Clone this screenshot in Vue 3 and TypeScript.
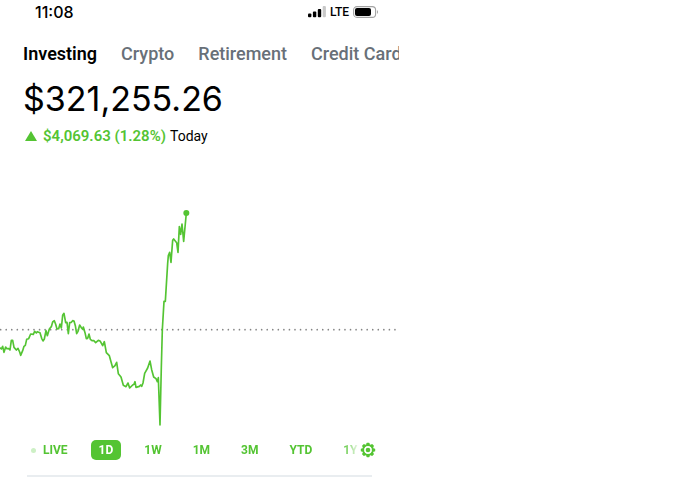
<script setup lang="ts">
import { ref } from 'vue'

const accounts: string[] = ['Investing', 'Crypto', 'Retirement', 'Credit Card']
const ranges: string[] = ['LIVE', '1D', '1W', '1M', '3M', 'YTD', '1Y']

const account = ref('Investing')
const range = ref('1D')

const samples: [number, number][] = [
  [0, 443], [4, 447], [8, 439], [12, 457], [17, 441], [20, 446], [26, 446], [30, 450],
  [34, 421], [38, 421], [42, 442], [49, 450], [54, 445], [59, 456], [62, 466], [68, 452],
  [72, 439], [76, 436], [80, 418], [86, 416], [92, 402], [100, 403], [104, 394], [109, 399],
  [112, 395], [120, 398], [125, 415], [129, 423], [133, 417], [138, 392], [142, 407], [148, 387],
  [154, 380], [158, 366], [163, 362], [167, 373], [171, 387], [176, 386], [180, 372], [184, 384],
  [188, 346], [192, 340], [197, 368], [201, 367], [205, 401], [209, 368], [214, 367], [218, 362],
  [222, 363], [226, 377], [230, 401], [234, 394], [239, 375], [244, 383], [248, 388], [250, 381],
  [255, 398], [259, 416], [263, 415], [267, 402], [271, 418], [276, 422], [282, 422], [287, 428],
  [295, 421], [301, 424], [308, 437], [313, 425], [319, 458], [328, 467], [338, 503], [345, 497],
  [350, 487], [355, 521], [363, 531], [370, 556], [378, 560], [384, 549], [389, 564], [398, 555],
  [402, 553], [405, 545], [408, 562], [418, 559], [422, 555], [425, 559], [429, 549], [434, 520],
  [443, 504], [450, 483], [455, 509], [461, 531], [468, 536], [472, 545], [475, 533], [480, 675],
  [484, 500], [487, 389], [492, 304], [496, 304], [503, 190], [505, 167], [509, 157], [513, 187],
  [518, 121], [521, 117], [530, 128], [534, 157], [538, 80], [542, 103], [546, 72], [551, 124],
  [559, 39],
]
const line = samples.map(([x, y]) => `${x},${y}`).join(' ')
const last = samples[samples.length - 1]
</script>

<template>
  <main class="screen">
    <header class="status">
      <time class="clock">11:08</time>
      <div class="signals">
        <svg class="bars" viewBox="0 0 18 12" aria-hidden="true">
          <rect x="0" y="7.5" width="3.4" height="3.8" rx="1" />
          <rect x="4.9" y="5.5" width="3.4" height="5.8" rx="1" />
          <rect x="9.8" y="3" width="3.4" height="8.3" rx="1" />
          <rect x="14.7" y="0" width="3.2" height="11.3" rx="1" fill="#c8c8c8" />
        </svg>
        <span class="network">LTE</span>
        <svg class="battery" viewBox="0 0 26 12" aria-hidden="true">
          <rect x="0.6" y="0.6" width="22" height="10.8" rx="3.4" fill="none" stroke="#a3a3a3" stroke-width="1.1" />
          <rect x="2" y="2" width="16" height="8" rx="2" />
          <path d="M24 4Q26 6 24 8Z" fill="#a3a3a3" />
        </svg>
      </div>
    </header>

    <nav class="accounts">
      <button
        v-for="name in accounts"
        :key="name"
        type="button"
        class="account"
        :class="{ active: name === account }"
        @click="account = name"
      >{{ name }}</button>
    </nav>

    <h1 class="total">$321,255.26</h1>
    <p class="change">
      <svg class="up" viewBox="0 0 12 10" aria-hidden="true"><path d="M6 0L12 10H0Z" /></svg>
      <strong class="gain">$4,069.63 (1.28%)</strong>
      <span>Today</span>
    </p>

    <svg class="chart" viewBox="0 0 1197 690" role="img" aria-label="Portfolio value today">
      <line class="baseline" x1="2" y1="389" x2="1190" y2="389" />
      <polyline class="trend" :points="line" />
      <circle class="now" :cx="last[0]" :cy="last[1]" r="9" />
    </svg>

    <div class="controls">
      <div class="ranges">
        <button
          v-for="name in ranges"
          :key="name"
          type="button"
          class="range"
          :class="{ selected: name === range }"
          @click="range = name"
        ><i v-if="name === 'LIVE'" class="pulse"></i>{{ name }}</button>
      </div>
      <button type="button" class="settings" aria-label="Chart settings">
        <svg viewBox="-8 -8 16 16" aria-hidden="true">
          <g class="teeth">
            <rect v-for="n in 8" :key="n" x="-1.6" y="-7.2" width="3.2" height="3" rx="0.7" :transform="`rotate(${n * 45})`" />
          </g>
          <circle r="4.9" fill="none" stroke="currentColor" stroke-width="2" />
          <circle r="2.3" />
        </svg>
      </button>
    </div>
    <hr class="divider" />
  </main>
</template>

<style>
body {
  margin: 0;
  background: #fff;
}
</style>

<style scoped>
.screen {
  max-width: 399px;
  overflow: hidden;
  color: #000;
  font-family: Roboto, "Liberation Sans", sans-serif;
}
button {
  margin: 0;
  padding: 0;
  border: 0;
  background: none;
  font: inherit;
  color: inherit;
  white-space: nowrap;
  cursor: pointer;
}
svg {
  display: block;
  flex: none;
}
.status {
  display: flex;
  align-items: center;
  justify-content: space-between;
  height: 24px;
  padding: 0 20px 0 35px;
}
.clock {
  font: 500 16px/24px Inter, sans-serif;
}
.signals {
  display: flex;
  align-items: center;
  gap: 4px;
}
.bars {
  width: 18px;
  height: 12px;
}
.network {
  font-size: 12px;
  font-weight: 500;
  line-height: 24px;
}
.battery {
  width: 26px;
  height: 12px;
}
.accounts {
  display: flex;
  gap: 24px;
  margin-top: 18px;
  padding-left: 23px;
}
.account {
  flex: none;
  color: #687078;
  font-size: 18px;
  font-weight: 500;
  line-height: 24px;
}
.account.active {
  color: #000;
  font-weight: 600;
}
.total {
  margin: 13px 0 0;
  padding-left: 23px;
  font-family: Inter, sans-serif;
  font-size: 34px;
  font-weight: 400;
  line-height: 40px;
}
.change {
  display: flex;
  align-items: center;
  gap: 4px;
  margin: 7px 0 0;
  padding-left: 25px;
  font-size: 14px;
  line-height: 20px;
}
.up {
  width: 12px;
  height: 10px;
  margin-right: 2px;
  fill: #54c433;
}
.gain {
  color: #54c433;
  font-size: 15px;
  font-weight: 600;
}
.chart {
  width: 100%;
  margin-top: 54px;
}
.baseline {
  stroke: #858585;
  stroke-width: 5;
  stroke-linecap: round;
  stroke-dasharray: 0 16.66;
}
.trend {
  fill: none;
  stroke: #54c433;
  stroke-width: 5;
  stroke-linejoin: round;
}
.now {
  fill: #54c433;
}
.controls {
  display: flex;
  align-items: center;
  margin-top: 10px;
  padding: 0 23px 0 31px;
  color: #54c433;
}
.ranges {
  display: flex;
  flex: 1;
  gap: 15px;
  min-width: 0;
  overflow: hidden;
  mask-image: linear-gradient(to right, #000 calc(100% - 18px), transparent);
}
.range {
  display: flex;
  flex: none;
  align-items: center;
  padding: 0 8px;
  border-radius: 5px;
  font-size: 12px;
  font-weight: 700;
  line-height: 20px;
}
.range:first-child {
  padding-left: 0;
}
.range:last-child {
  padding-right: 0;
}
.range.selected {
  background: #54c433;
  color: #fff;
}
.pulse {
  width: 5px;
  height: 5px;
  margin-right: 7px;
  border-radius: 50%;
  background: #cdf0c5;
}
.settings {
  flex: none;
  width: 16px;
  height: 16px;
}
.settings svg {
  width: 16px;
  height: 16px;
  fill: currentColor;
}
.divider {
  height: 2px;
  margin: 15px 27px 4px;
  border: 0;
  background: #e9edf0;
}
</style>
